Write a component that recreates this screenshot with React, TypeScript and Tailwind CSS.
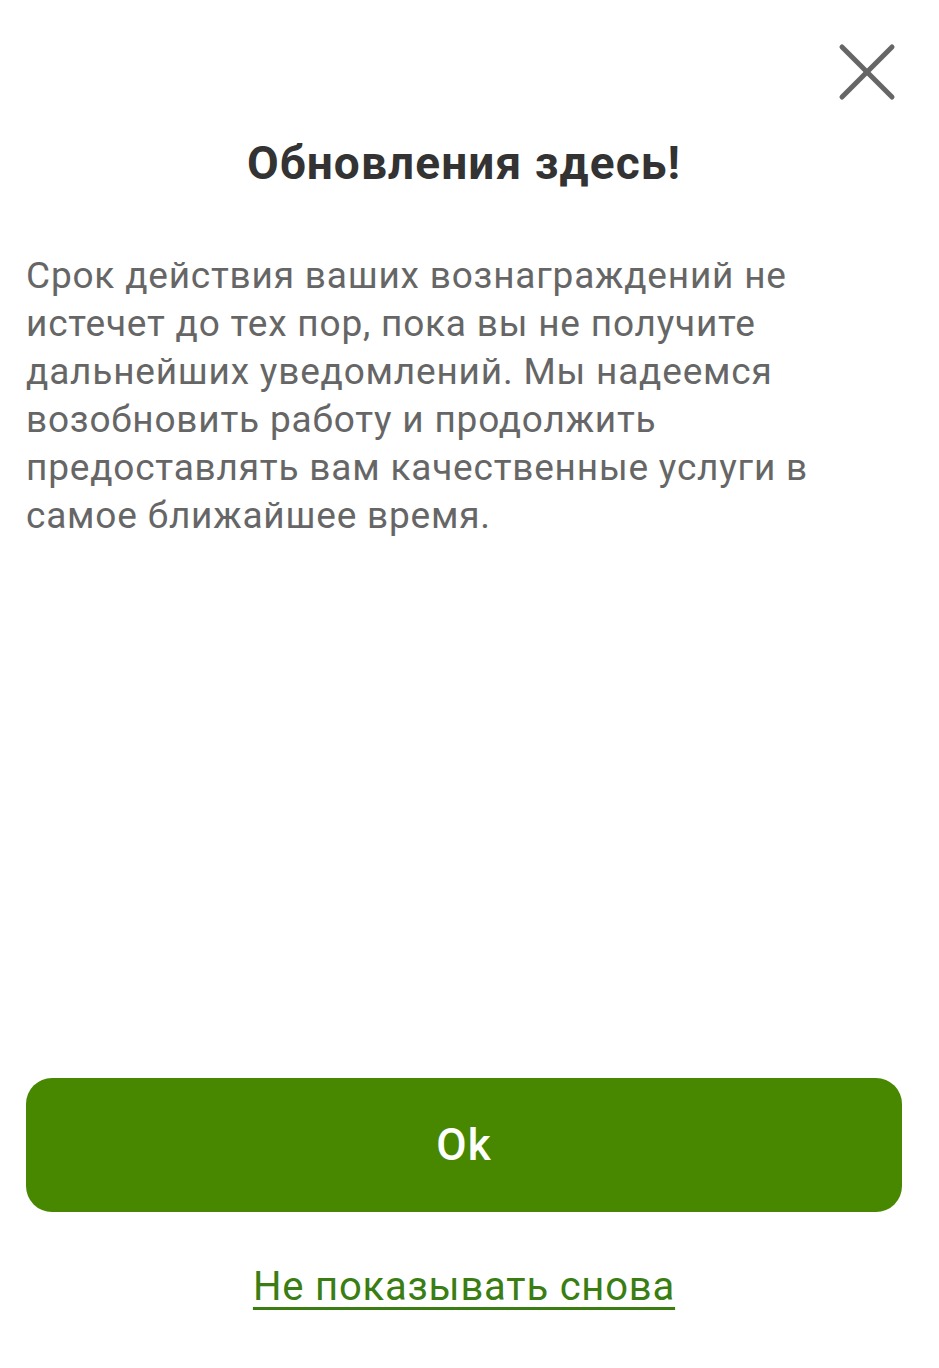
export default function App() {
  return (
    <div
      className="relative flex flex-col w-[939px] h-[1368px] bg-white px-[26px]"
      style={{ fontFamily: "Roboto, 'Noto Sans', sans-serif" }}
    >
      {/* close */}
      <button className="absolute right-[40px] top-[40px] w-[64px] h-[64px] flex items-center justify-center">
        <svg width="64" height="64" viewBox="0 0 64 64" fill="none" stroke="#666666" strokeWidth="5" strokeLinecap="round">
          <path d="M7 7 L57 57" />
          <path d="M57 7 L7 57" />
        </svg>
      </button>

      <h1 className="mt-[136px] pr-[11px] text-center text-[46px] leading-[54px] font-bold tracking-[1.1px] text-[#333333]">
        Обновления здесь!
      </h1>

      <p className="mt-[62px] text-[37px] leading-[48px] tracking-[0.8px] text-[#666666] pr-[60px]">
        Срок действия ваших вознаграждений не истечет до тех пор, пока вы не получите дальнейших уведомлений. Мы надеемся
        возобновить работу и продолжить предоставлять вам качественные услуги в самое ближайшее время.
      </p>

      <div className="flex-1" />

      <button className="mr-[11px] h-[134px] rounded-[26px] bg-[#478800] text-white text-[44px] font-medium tracking-[1px]">
        Ok
      </button>

      <div className="mt-[50px] mb-[56px] flex justify-center pr-[11px]">
        <a className="text-[40px] leading-[50px] tracking-[0.8px] text-[#3a7d12] underline decoration-[3px] underline-offset-[7px]">
          Не показывать снова
        </a>
      </div>
    </div>
  );
}
